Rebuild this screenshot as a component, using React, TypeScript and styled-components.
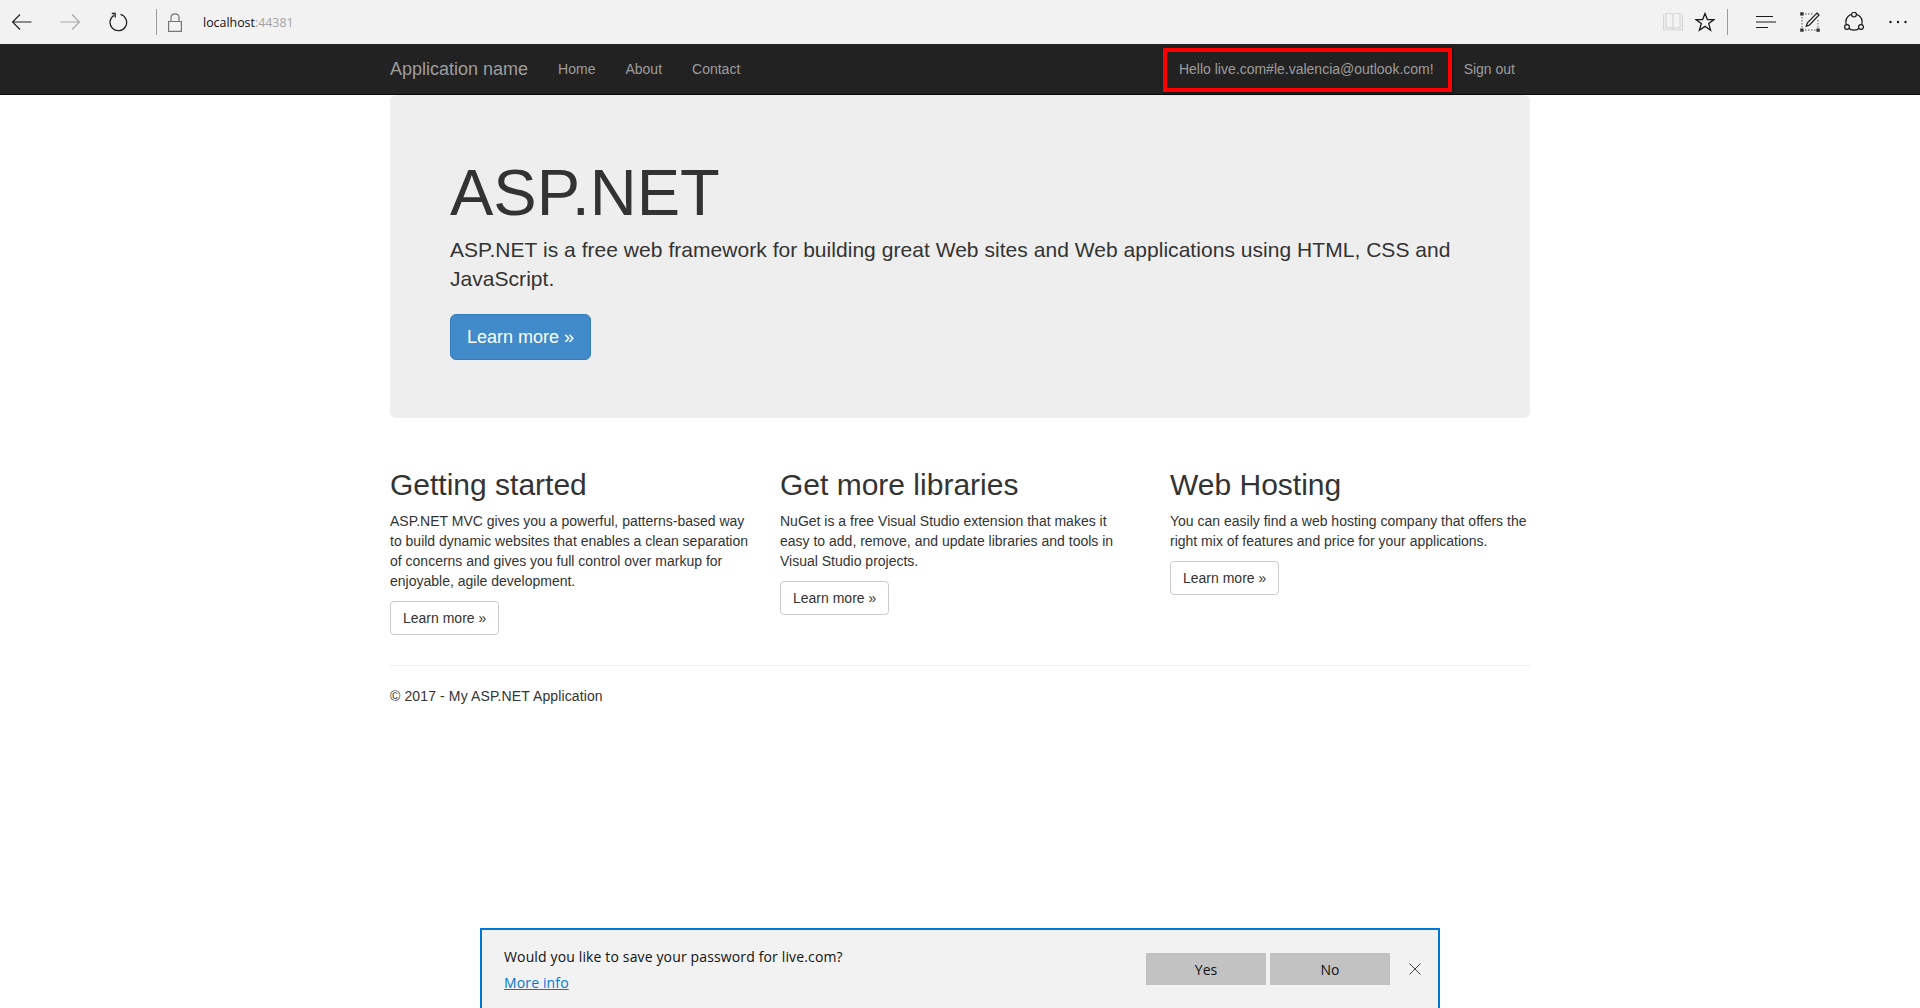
import React from "react";
import styled, { createGlobalStyle } from "styled-components";

const GlobalStyle = createGlobalStyle`
    html, body {
        margin: 0;
        padding: 0;
        height: 100%;
        overflow: hidden;
        background-color: #fff;
    }
    body {
        font-family: "Liberation Sans", Arial, sans-serif;
        font-size: 14px;
        line-height: 20px;
        color: #333;
    }
    * {
        box-sizing: border-box;
    }
`;

const BrowserBar = styled.div`
    display: flex;
    align-items: center;
    height: 44px;
    background-color: #f2f2f2;
`;

const BrowserGroup = styled.div`
    display: flex;
    align-items: center;
    height: 100%;
`;

const NavGroup = styled(BrowserGroup)`
    margin-left: -2px;
`;

const BrowserButton = styled.span<{ $width: number }>`
    display: flex;
    align-items: center;
    justify-content: center;
    flex: none;
    width: ${({ $width }) => $width}px;
    height: 100%;
`;

const BarDivider = styled.span<{ $gap: number }>`
    flex: none;
    width: 1px;
    height: 26px;
    margin-left: ${({ $gap }) => $gap}px;
    background-color: #9a9a9a;
`;

const LockIcon = styled.svg`
    margin-left: 11px;
`;

const Address = styled.div`
    flex: 1;
    margin-left: 21px;
    padding-top: 1px;
    font-family: "Open Sans", "Noto Sans", sans-serif;
    font-size: 12.4px;
    color: #111;
`;

const AddressPort = styled.span`
    color: #a2a2a2;
`;

const Navbar = styled.nav`
    height: 51px;
    background-color: #222;
    border-bottom: 1px solid #080808;
`;

const NavContainer = styled.div`
    display: flex;
    align-items: center;
    width: 1170px;
    height: 50px;
    margin: 0 auto;
    padding: 0 15px;
`;

const Brand = styled.a`
    padding-right: 15px;
    font-size: 18px;
    color: #9d9d9d;
`;

const NavLink = styled.a`
    position: relative;
    padding: 15px;
    color: #9d9d9d;
`;

const NavSpacer = styled.div`
    flex: 1;
`;

const HelloLink = styled(NavLink)`
    &::after {
        content: "";
        position: absolute;
        top: 4px;
        right: -3px;
        bottom: 2px;
        left: -1px;
        border: 4px solid #f00;
        box-shadow: 1px 1px 3px rgba(0, 0, 0, 0.45);
    }
`;

const Container = styled.main`
    width: 1170px;
    margin: 0 auto;
    padding: 0 15px;
`;

const Jumbotron = styled.section`
    height: 323px;
    margin-bottom: 30px;
    padding: 50px 60px 0;
    background-color: #eee;
    border-radius: 6px;
`;

const JumboTitle = styled.h1`
    margin: 14px 0 8px;
    font-size: 65px;
    font-weight: 500;
    line-height: 68px;
`;

const Lead = styled.p`
    margin: 0 0 21px;
    font-size: 21px;
    font-weight: 400;
    line-height: 29px;
    letter-spacing: 0.04px;
`;

const PrimaryButton = styled.a`
    display: inline-block;
    padding: 10px 16px;
    font-size: 18px;
    line-height: 24px;
    color: #fff;
    background-color: #428bca;
    border: 1px solid #357ebd;
    border-radius: 6px;
`;

const Columns = styled.div`
    display: grid;
    grid-template-columns: repeat(3, 360px);
    column-gap: 30px;
`;

const Column = styled.div`
    min-width: 0;
`;

const ColumnTitle = styled.h2`
    margin: 20px 0 10px;
    font-size: 30px;
    font-weight: 500;
    line-height: 33px;
`;

const ColumnText = styled.p`
    margin: 0 0 10px;
`;

const DefaultButton = styled.a`
    display: inline-block;
    padding: 6px 12px;
    color: #333;
    background-color: #fff;
    border: 1px solid #ccc;
    border-radius: 4px;
`;

const Divider = styled.hr`
    margin: 30px 0 20px;
    border: 0;
    border-top: 1px solid #eee;
`;

const Footer = styled.footer`
    letter-spacing: 0.12px;
`;

const InfoBar = styled.aside`
    position: fixed;
    top: 928px;
    left: 480px;
    display: flex;
    justify-content: space-between;
    width: 960px;
    height: 110px;
    padding: 14px 0 0 22px;
    font-family: "Open Sans", "Noto Sans", sans-serif;
    color: #111;
    background-color: #f2f2f2;
    border: 2px solid #0078d7;
`;

const InfoText = styled.div`
    font-size: 14px;
    line-height: 26px;
    letter-spacing: 0.14px;
`;

const InfoLink = styled.a`
    color: #0078d7;
    text-decoration: underline;
`;

const InfoActions = styled.div`
    display: flex;
    align-items: center;
    gap: 4px;
    height: 32px;
    margin-top: 9px;
`;

const InfoButton = styled.button`
    width: 120px;
    height: 32px;
    padding: 0;
    font-family: inherit;
    font-size: 14px;
    color: #111;
    background-color: #c2c2c2;
    border: 0;
`;

const InfoClose = styled.span`
    display: flex;
    align-items: center;
    justify-content: center;
    width: 44px;
    height: 32px;
    padding-right: 2px;
`;

const BackIcon = () => (
    <svg width="20" height="16" viewBox="0 0 20 16" fill="none" stroke="#222" strokeWidth="1.2">
        <path d="M0.5 8H19.5M8 0.5L0.5 8L8 15.5" />
    </svg>
);

const ForwardIcon = () => (
    <svg width="20" height="16" viewBox="0 0 20 16" fill="none" stroke="#a8a8a8" strokeWidth="1.2">
        <path d="M0.5 8H19.5M12 0.5L19.5 8L12 15.5" />
    </svg>
);

const RefreshIcon = () => (
    <svg width="20" height="20" viewBox="0 0 20 20" fill="none" stroke="#222" strokeWidth="1.3">
        <path d="M6.2 3.2A8.3 8.3 0 1 0 12.5 2.4" />
        <path d="M3.8 1.5H7.2V5.5" />
    </svg>
);

const ReadingIcon = () => (
    <svg width="20" height="20" viewBox="0 0 20 20" fill="none" stroke="#d6d6d6" strokeWidth="1.2">
        <path d="M0.6 2.5V18H19.4V2.5M3 15.8V1.5C5.5 1 8 1.2 10 2.5C12 1.2 14.5 1 17 1.5V15.8C14.5 15.3 12 15.5 10 16.8C8 15.5 5.5 15.3 3 15.8ZM10 2.5V16.8" />
    </svg>
);

const StarIcon = () => (
    <svg width="20" height="20" viewBox="0 0 20 20" fill="none" stroke="#1a1a1a" strokeWidth="1.3">
        <path d="M10 1.6L12.4 7.6H19L13.7 11.6L15.6 18.2L10 14.4L4.4 18.2L6.3 11.6L1 7.6H7.6Z" />
    </svg>
);

const HubIcon = () => (
    <svg width="20" height="14" viewBox="0 0 20 14" fill="none" stroke="#1a1a1a" strokeWidth="1.2">
        <path d="M0 1.5H17M0 7H20M0 12.5H12" />
    </svg>
);

const NoteIcon = () => (
    <svg width="20" height="20" viewBox="0 0 20 20" fill="none">
        <path d="M2 2H14M2 18H18M2 2V18M18 8V18" stroke="#555" strokeWidth="1" strokeDasharray="1.5 1.5" />
        <path d="M0.2 0.2H3.6V3.6H0.2ZM16.4 16.4H19.8V19.8H16.4ZM0.2 16.4H3.6V19.8H0.2Z" fill="#333" />
        <path d="M17 1L19 3L9.5 13L6.2 14.2L7.4 10.8Z" fill="#f2f2f2" stroke="#1a1a1a" strokeWidth="1.2" />
    </svg>
);

const ShareIcon = () => (
    <svg width="20" height="20" viewBox="0 0 20 20" fill="none" stroke="#1a1a1a" strokeWidth="1.2">
        <circle cx="10" cy="10" r="8.2" />
        <circle cx="10" cy="2.6" r="2.4" fill="#f2f2f2" />
        <circle cx="3" cy="15" r="2.4" fill="#f2f2f2" />
        <circle cx="17" cy="15" r="2.4" fill="#f2f2f2" />
    </svg>
);

const MoreIcon = () => (
    <svg width="18" height="4" viewBox="0 0 18 4" fill="#1a1a1a">
        <circle cx="1.5" cy="2" r="1.2" />
        <circle cx="9" cy="2" r="1.2" />
        <circle cx="16.5" cy="2" r="1.2" />
    </svg>
);

const CloseIcon = () => (
    <svg width="12" height="12" viewBox="0 0 12 12" fill="none" stroke="#444" strokeWidth="1">
        <path d="M0.5 0.5L11.5 11.5M11.5 0.5L0.5 11.5" />
    </svg>
);

const columns = [
    {
        title: "Getting started",
        text: "ASP.NET MVC gives you a powerful, patterns-based way to build dynamic websites that enables a clean separation of concerns and gives you full control over markup for enjoyable, agile development.",
    },
    {
        title: "Get more libraries",
        text: "NuGet is a free Visual Studio extension that makes it easy to add, remove, and update libraries and tools in Visual Studio projects.",
    },
    {
        title: "Web Hosting",
        text: "You can easily find a web hosting company that offers the right mix of features and price for your applications.",
    },
];

const App: React.FC = () => {
    return (
        <>
            <GlobalStyle />
            <BrowserBar>
                <NavGroup>
                    <BrowserButton $width={48}><BackIcon /></BrowserButton>
                    <BrowserButton $width={48}><ForwardIcon /></BrowserButton>
                    <BrowserButton $width={48}><RefreshIcon /></BrowserButton>
                </NavGroup>
                <BarDivider $gap={14} />
                <LockIcon width="14" height="19" viewBox="0 0 14 19" fill="none" stroke="#777" strokeWidth="1.2">
                    <path d="M0.6 8.5H13.4V18.4H0.6ZM3 8.5V4.5C3 -0.4 11 -0.4 11 4.5V8.5" />
                </LockIcon>
                <Address>localhost<AddressPort>:44381</AddressPort></Address>
                <BrowserGroup>
                    <BrowserButton $width={32}><ReadingIcon /></BrowserButton>
                    <BrowserButton $width={32}><StarIcon /></BrowserButton>
                </BrowserGroup>
                <BarDivider $gap={6} />
                <BrowserGroup>
                    <BrowserButton $width={16} />
                    <BrowserButton $width={44}><HubIcon /></BrowserButton>
                    <BrowserButton $width={44}><NoteIcon /></BrowserButton>
                    <BrowserButton $width={44}><ShareIcon /></BrowserButton>
                    <BrowserButton $width={44}><MoreIcon /></BrowserButton>
                </BrowserGroup>
            </BrowserBar>
            <Navbar>
                <NavContainer>
                    <Brand>Application name</Brand>
                    <NavLink>Home</NavLink>
                    <NavLink>About</NavLink>
                    <NavLink>Contact</NavLink>
                    <NavSpacer />
                    <HelloLink>Hello live.com#le.valencia@outlook.com!</HelloLink>
                    <NavLink>Sign out</NavLink>
                </NavContainer>
            </Navbar>
            <Container>
                <Jumbotron>
                    <JumboTitle>ASP.NET</JumboTitle>
                    <Lead>ASP.NET is a free web framework for building great Web sites and Web applications using HTML, CSS and JavaScript.</Lead>
                    <PrimaryButton>Learn more »</PrimaryButton>
                </Jumbotron>
                <Columns>
                    {columns.map((column) => (
                        <Column key={column.title}>
                            <ColumnTitle>{column.title}</ColumnTitle>
                            <ColumnText>{column.text}</ColumnText>
                            <DefaultButton>Learn more »</DefaultButton>
                        </Column>
                    ))}
                </Columns>
                <Divider />
                <Footer>© 2017 - My ASP.NET Application</Footer>
            </Container>
            <InfoBar>
                <InfoText>
                    Would you like to save your password for live.com?
                    <br />
                    <InfoLink>More info</InfoLink>
                </InfoText>
                <InfoActions>
                    <InfoButton>Yes</InfoButton>
                    <InfoButton>No</InfoButton>
                    <InfoClose><CloseIcon /></InfoClose>
                </InfoActions>
            </InfoBar>
        </>
    );
};

export default App;
